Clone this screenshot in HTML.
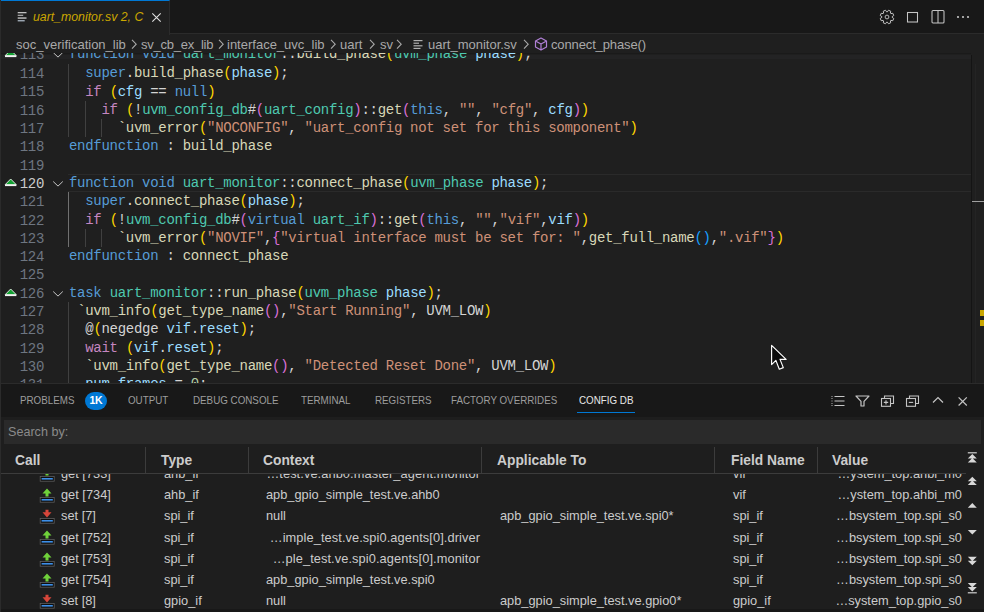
<!DOCTYPE html>
<html><head><meta charset="utf-8">
<style>
*{margin:0;padding:0;box-sizing:border-box}
html,body{width:984px;height:612px;overflow:hidden;background:#1f1f1f;font-family:"Liberation Sans",sans-serif}
.abs{position:absolute}
#tabbar{position:absolute;left:0;top:0;width:984px;height:34px;background:#181818;border-bottom:1px solid #2b2b2b}
#tab{position:absolute;left:0;top:0;width:170px;height:35px;background:#1f1f1f;border-top:1px solid #0078d4;border-right:1px solid #2b2b2b}
#tab .t{position:absolute;left:33px;top:9px;font-style:italic;font-size:12.3px;color:#cca700;white-space:nowrap}
#bc{position:absolute;left:0;top:35px;width:984px;height:18px;background:#1f1f1f;font-size:13px;color:#a9a9a9;white-space:nowrap}
#bc span{position:absolute;top:2px}
#editor{position:absolute;left:0;top:53px;width:984px;height:330px;overflow:hidden;background:#1f1f1f}
#editor .ln,#editor .num{position:absolute;height:18.3px;line-height:18.3px;font-family:"Liberation Mono",monospace;font-size:14px;letter-spacing:-0.28px;white-space:pre}
#editor .ln{left:69px}
#editor .num{left:0;width:44px;text-align:right;color:#6e7681;letter-spacing:-0.3px}
#editor .num.act{color:#cccccc}
.ed-inner{position:absolute;left:0;top:-53px;width:984px;height:383px}
.tri{position:absolute;left:4px}
.chev{position:absolute;left:52px}
.guide{position:absolute;width:1px;background:#404040}
#panel{position:absolute;left:0;top:383px;width:984px;height:229px;background:#181818;border-top:1px solid #2b2b2b}
.ptab{position:absolute;top:9.5px;font-size:10.9px;color:#9d9d9d;white-space:nowrap;transform:scaleX(0.9);transform-origin:0 0}
#search{position:absolute;left:4px;top:36px;width:977px;height:24px;background:#2a2a2a;color:#8b8b8b;font-size:12.6px}
#search span{position:absolute;left:4px;top:5px}
.th{position:absolute;top:68.5px;font-weight:bold;font-size:13.8px;color:#cccccc;white-space:nowrap}
.sep{position:absolute;top:63px;width:1px;height:26px;background:#3c3c3c}
.c{position:absolute;font-size:12.8px;color:#cccccc;white-space:nowrap}
</style></head><body>
<div class="abs" style="left:0;top:0;width:1px;height:612px;background:#2b2b2b;z-index:10"></div>
<div id="tabbar"></div>
<div id="tab">
  <svg class="abs" style="left:17px;top:10px" width="10" height="12" viewBox="0 0 10 12"><rect x="0.7" y="1" width="8.8" height="1.3" fill="#c0c0c0"/><rect x="0.7" y="3.7" width="5.5" height="1.3" fill="#a0a0a0"/><rect x="0.7" y="6.4" width="8.8" height="1.3" fill="#d0d0d0"/><rect x="0.7" y="9.1" width="7" height="1.3" fill="#a8b4c0"/></svg>
  <div class="t">uart_monitor.sv 2, C</div>
  <svg class="abs" style="left:151px;top:11px" width="11" height="11" viewBox="0 0 11 11"><path d="M1.3 1.3 L9.7 9.7 M9.7 1.3 L1.3 9.7" stroke="#e0e0e0" stroke-width="1.1"/></svg>
</div>
<!-- editor actions -->
<svg class="abs" style="left:879px;top:9px" width="16" height="16" viewBox="0 0 16 16"><path fill="none" stroke="#c5c5c5" stroke-width="1" stroke-linejoin="round" d="M13.09 8.31 L14.74 9.49 L13.82 11.71 L11.82 11.38 L11.38 11.82 L11.71 13.82 L9.49 14.74 L8.31 13.09 L7.69 13.09 L6.51 14.74 L4.29 13.82 L4.62 11.82 L4.18 11.38 L2.18 11.71 L1.26 9.49 L2.91 8.31 L2.91 7.69 L1.26 6.51 L2.18 4.29 L4.18 4.62 L4.62 4.18 L4.29 2.18 L6.51 1.26 L7.69 2.91 L8.31 2.91 L9.49 1.26 L11.71 2.18 L11.38 4.18 L11.82 4.62 L13.82 4.29 L14.74 6.51 L13.09 7.69Z"/><circle cx="8" cy="8" r="1.9" fill="none" stroke="#c5c5c5" stroke-width="0.9"/></svg>
<svg class="abs" style="left:906px;top:11px" width="13" height="12" viewBox="0 0 13 12"><rect x="1.5" y="1.5" width="10" height="9.5" fill="none" stroke="#c5c5c5" stroke-width="1.05"/></svg>
<svg class="abs" style="left:931px;top:9px" width="14" height="15" viewBox="0 0 14 15"><rect x="1" y="1.5" width="12" height="12.5" rx="1" fill="none" stroke="#c5c5c5" stroke-width="1.05"/><path d="M7 1.5 V14" stroke="#c5c5c5" stroke-width="1.05"/></svg>
<svg class="abs" style="left:956px;top:15px" width="14" height="4" viewBox="0 0 14 4"><circle cx="2" cy="2" r="1.1" fill="#c5c5c5"/><circle cx="7" cy="2" r="1.1" fill="#c5c5c5"/><circle cx="12" cy="2" r="1.1" fill="#c5c5c5"/></svg>

<div id="bc">
  <span style="left:16px">soc_verification_lib</span>
  <span style="left:141px;letter-spacing:-0.25px">sv_cb_ex_lib</span>
  <span style="left:227px">interface_uvc_lib</span>
  <span style="left:340px">uart</span>
  <span style="left:380px">sv</span>
  <span style="left:428px">uart_monitor.sv</span>
  <span style="left:551px;letter-spacing:-0.13px">connect_phase()</span>
  <svg class="abs" style="left:130px;top:4px" width="8" height="12" viewBox="0 0 8 12"><path d="M2 0.8 L6.2 5.2 L2 9.6" fill="none" stroke="#a9a9a9" stroke-width="1.1"/></svg>
  <svg class="abs" style="left:217px;top:4px" width="8" height="12" viewBox="0 0 8 12"><path d="M2 0.8 L6.2 5.2 L2 9.6" fill="none" stroke="#a9a9a9" stroke-width="1.1"/></svg>
  <svg class="abs" style="left:329px;top:4px" width="8" height="12" viewBox="0 0 8 12"><path d="M2 0.8 L6.2 5.2 L2 9.6" fill="none" stroke="#a9a9a9" stroke-width="1.1"/></svg>
  <svg class="abs" style="left:368px;top:4px" width="8" height="12" viewBox="0 0 8 12"><path d="M2 0.8 L6.2 5.2 L2 9.6" fill="none" stroke="#a9a9a9" stroke-width="1.1"/></svg>
  <svg class="abs" style="left:395px;top:4px" width="8" height="12" viewBox="0 0 8 12"><path d="M2 0.8 L6.2 5.2 L2 9.6" fill="none" stroke="#a9a9a9" stroke-width="1.1"/></svg>
  <svg class="abs" style="left:413px;top:4px" width="10" height="11" viewBox="0 0 10 11"><rect x="0.5" y="1" width="9" height="1.2" fill="#b0b0b0"/><rect x="0.5" y="3.6" width="5.5" height="1.2" fill="#b0b0b0"/><rect x="0.5" y="6.2" width="9" height="1.2" fill="#b0b0b0"/><rect x="0.5" y="8.8" width="7" height="1.2" fill="#b0b0b0"/></svg>
  <svg class="abs" style="left:522px;top:4px" width="8" height="12" viewBox="0 0 8 12"><path d="M2 0.8 L6.2 5.2 L2 9.6" fill="none" stroke="#a9a9a9" stroke-width="1.1"/></svg>
  <svg class="abs" style="left:534px;top:2px" width="14" height="14" viewBox="0 0 14 14"><path d="M7 1 L12.5 4 V10 L7 13 L1.5 10 V4 Z M1.5 4 L7 7 L12.5 4 M7 7 V13" fill="none" stroke="#b180d7" stroke-width="1.2" stroke-linejoin="round"/></svg>
</div>

<div id="editor"><div class="ed-inner">
<div class="abs" style="left:0;top:52px;width:971px;height:1.5px;background:#1a1a1a"></div><div class="abs" style="left:0;top:55px;width:971px;height:4px;background:#232324"></div>
<div class="guide" style="left:68.0px;top:64.10px;height:73.20px;background:#404040"></div>
<div class="guide" style="left:85.0px;top:100.70px;height:36.60px;background:#404040"></div>
<div class="guide" style="left:101.0px;top:119.00px;height:18.30px;background:#404040"></div>
<div class="guide" style="left:68.0px;top:192.20px;height:54.90px;background:#707070"></div>
<div class="guide" style="left:85.0px;top:228.80px;height:18.30px;background:#404040"></div>
<div class="guide" style="left:101.0px;top:228.80px;height:18.30px;background:#404040"></div>
<div class="guide" style="left:68.0px;top:302.00px;height:91.50px;background:#404040"></div>
<div class="abs" style="left:68px;top:173.9px;width:903px;height:18.3px;border-top:1px solid #2a2a2a;border-bottom:1px solid #2a2a2a"></div>
<div class="num" style="top:45.90px">113</div>
<svg class="tri" style="top:49.30px" width="14" height="10" viewBox="0 0 14 10"><path d="M1.2 6.6 L6.7 1 L12.2 6.6 Z" fill="#12a233" stroke="#e8f0e8" stroke-width="0.9"/><rect x="1" y="6.6" width="11.4" height="1.5" fill="#f4f4f4"/></svg>
<svg class="chev" style="top:51.10px" width="12" height="8" viewBox="0 0 12 8"><path d="M1.2 1.5 L6 6.1 L10.8 1.5" fill="none" stroke="#c5c5c5" stroke-width="1.0"/></svg>
<div class="num" style="top:65.10px">114</div>
<div class="num" style="top:83.40px">115</div>
<div class="num" style="top:101.70px">116</div>
<div class="num" style="top:120.00px">117</div>
<div class="num" style="top:138.30px">118</div>
<div class="num" style="top:156.60px">119</div>
<div class="num act" style="top:174.90px">120</div>
<svg class="tri" style="top:178.30px" width="14" height="10" viewBox="0 0 14 10"><path d="M1.2 6.6 L6.7 1 L12.2 6.6 Z" fill="#12a233" stroke="#e8f0e8" stroke-width="0.9"/><rect x="1" y="6.6" width="11.4" height="1.5" fill="#f4f4f4"/></svg>
<svg class="chev" style="top:180.10px" width="12" height="8" viewBox="0 0 12 8"><path d="M1.2 1.5 L6 6.1 L10.8 1.5" fill="none" stroke="#c5c5c5" stroke-width="1.0"/></svg>
<div class="num" style="top:193.20px">121</div>
<div class="num" style="top:211.50px">122</div>
<div class="num" style="top:229.80px">123</div>
<div class="num" style="top:248.10px">124</div>
<div class="num" style="top:266.40px">125</div>
<div class="num" style="top:284.70px">126</div>
<svg class="tri" style="top:288.10px" width="14" height="10" viewBox="0 0 14 10"><path d="M1.2 6.6 L6.7 1 L12.2 6.6 Z" fill="#12a233" stroke="#e8f0e8" stroke-width="0.9"/><rect x="1" y="6.6" width="11.4" height="1.5" fill="#f4f4f4"/></svg>
<svg class="chev" style="top:289.90px" width="12" height="8" viewBox="0 0 12 8"><path d="M1.2 1.5 L6 6.1 L10.8 1.5" fill="none" stroke="#c5c5c5" stroke-width="1.0"/></svg>
<div class="num" style="top:303.00px">127</div>
<div class="num" style="top:321.30px">128</div>
<div class="num" style="top:339.60px">129</div>
<div class="num" style="top:357.90px">130</div>
<div class="num" style="top:376.20px">131</div>
<div class="ln" style="top:45.00px"><span style="color:#569cd6">function</span><span style="color:#d4d4d4"> </span><span style="color:#569cd6">void</span><span style="color:#d4d4d4"> </span><span style="color:#4ec9b0">uart_monitor</span><span style="color:#d4d4d4">::</span><span style="color:#d8d8b8">build_phase</span><span style="color:#ffd700">(</span><span style="color:#4ec9b0">uvm_phase</span><span style="color:#d4d4d4"> </span><span style="color:#9cdcfe">phase</span><span style="color:#ffd700">)</span><span style="color:#d4d4d4">;</span></div>
<div class="ln" style="top:64.20px"><span style="color:#d4d4d4">  </span><span style="color:#569cd6">super</span><span style="color:#d4d4d4">.</span><span style="color:#d8d8b8">build_phase</span><span style="color:#ffd700">(</span><span style="color:#9cdcfe">phase</span><span style="color:#ffd700">)</span><span style="color:#d4d4d4">;</span></div>
<div class="ln" style="top:82.50px"><span style="color:#d4d4d4">  </span><span style="color:#c586c0">if</span><span style="color:#d4d4d4"> </span><span style="color:#ffd700">(</span><span style="color:#9cdcfe">cfg</span><span style="color:#d4d4d4"> == </span><span style="color:#569cd6">null</span><span style="color:#ffd700">)</span></div>
<div class="ln" style="top:100.80px"><span style="color:#d4d4d4">    </span><span style="color:#c586c0">if</span><span style="color:#d4d4d4"> </span><span style="color:#ffd700">(</span><span style="color:#d4d4d4">!</span><span style="color:#4ec9b0">uvm_config_db</span><span style="color:#d4d4d4">#</span><span style="color:#da70d6">(</span><span style="color:#4ec9b0">uart_config</span><span style="color:#da70d6">)</span><span style="color:#d4d4d4">::</span><span style="color:#d8d8b8">get</span><span style="color:#da70d6">(</span><span style="color:#569cd6">this</span><span style="color:#d4d4d4">, </span><span style="color:#ce9178">""</span><span style="color:#d4d4d4">, </span><span style="color:#ce9178">"cfg"</span><span style="color:#d4d4d4">, </span><span style="color:#9cdcfe">cfg</span><span style="color:#da70d6">)</span><span style="color:#ffd700">)</span></div>
<div class="ln" style="top:119.10px"><span style="color:#d4d4d4">      </span><span style="color:#d8d8b8">`uvm_error</span><span style="color:#ffd700">(</span><span style="color:#ce9178">"NOCONFIG"</span><span style="color:#d4d4d4">, </span><span style="color:#ce9178">"uart_config not set for this somponent"</span><span style="color:#ffd700">)</span></div>
<div class="ln" style="top:137.40px"><span style="color:#569cd6">endfunction</span><span style="color:#d4d4d4"> : </span><span style="color:#d8d8b8">build_phase</span></div>
<div class="ln" style="top:155.70px"></div>
<div class="ln" style="top:174.00px"><span style="color:#569cd6">function</span><span style="color:#d4d4d4"> </span><span style="color:#569cd6">void</span><span style="color:#d4d4d4"> </span><span style="color:#4ec9b0">uart_monitor</span><span style="color:#d4d4d4">::</span><span style="color:#d8d8b8">connect_phase</span><span style="color:#ffd700">(</span><span style="color:#4ec9b0">uvm_phase</span><span style="color:#d4d4d4"> </span><span style="color:#9cdcfe">phase</span><span style="color:#ffd700">)</span><span style="color:#d4d4d4">;</span></div>
<div class="ln" style="top:192.30px"><span style="color:#d4d4d4">  </span><span style="color:#569cd6">super</span><span style="color:#d4d4d4">.</span><span style="color:#d8d8b8">connect_phase</span><span style="color:#ffd700">(</span><span style="color:#9cdcfe">phase</span><span style="color:#ffd700">)</span><span style="color:#d4d4d4">;</span></div>
<div class="ln" style="top:210.60px"><span style="color:#d4d4d4">  </span><span style="color:#c586c0">if</span><span style="color:#d4d4d4"> </span><span style="color:#ffd700">(</span><span style="color:#d4d4d4">!</span><span style="color:#4ec9b0">uvm_config_db</span><span style="color:#d4d4d4">#</span><span style="color:#da70d6">(</span><span style="color:#569cd6">virtual</span><span style="color:#d4d4d4"> </span><span style="color:#4ec9b0">uart_if</span><span style="color:#da70d6">)</span><span style="color:#d4d4d4">::</span><span style="color:#d8d8b8">get</span><span style="color:#da70d6">(</span><span style="color:#569cd6">this</span><span style="color:#d4d4d4">, </span><span style="color:#ce9178">""</span><span style="color:#d4d4d4">,</span><span style="color:#ce9178">"vif"</span><span style="color:#d4d4d4">,</span><span style="color:#9cdcfe">vif</span><span style="color:#da70d6">)</span><span style="color:#ffd700">)</span></div>
<div class="ln" style="top:228.90px"><span style="color:#d4d4d4">      </span><span style="color:#d8d8b8">`uvm_error</span><span style="color:#ffd700">(</span><span style="color:#ce9178">"NOVIF"</span><span style="color:#d4d4d4">,</span><span style="color:#da70d6">{</span><span style="color:#ce9178">"virtual interface must be set for: "</span><span style="color:#d4d4d4">,</span><span style="color:#d8d8b8">get_full_name</span><span style="color:#179fff">()</span><span style="color:#d4d4d4">,</span><span style="color:#ce9178">".vif"</span><span style="color:#da70d6">}</span><span style="color:#ffd700">)</span></div>
<div class="ln" style="top:247.20px"><span style="color:#569cd6">endfunction</span><span style="color:#d4d4d4"> : </span><span style="color:#d8d8b8">connect_phase</span></div>
<div class="ln" style="top:265.50px"></div>
<div class="ln" style="top:283.80px"><span style="color:#569cd6">task</span><span style="color:#d4d4d4"> </span><span style="color:#4ec9b0">uart_monitor</span><span style="color:#d4d4d4">::</span><span style="color:#d8d8b8">run_phase</span><span style="color:#ffd700">(</span><span style="color:#4ec9b0">uvm_phase</span><span style="color:#d4d4d4"> </span><span style="color:#9cdcfe">phase</span><span style="color:#ffd700">)</span><span style="color:#d4d4d4">;</span></div>
<div class="ln" style="top:302.10px"><span style="color:#d4d4d4"> </span><span style="color:#d8d8b8">`uvm_info</span><span style="color:#ffd700">(</span><span style="color:#d8d8b8">get_type_name</span><span style="color:#da70d6">()</span><span style="color:#d4d4d4">,</span><span style="color:#ce9178">"Start Running"</span><span style="color:#d4d4d4">, UVM_LOW</span><span style="color:#ffd700">)</span></div>
<div class="ln" style="top:320.40px"><span style="color:#d4d4d4">  @</span><span style="color:#ffd700">(</span><span style="color:#d4d4d4">negedge </span><span style="color:#9cdcfe">vif</span><span style="color:#d4d4d4">.</span><span style="color:#9cdcfe">reset</span><span style="color:#ffd700">)</span><span style="color:#d4d4d4">;</span></div>
<div class="ln" style="top:338.70px"><span style="color:#d4d4d4">  </span><span style="color:#c586c0">wait</span><span style="color:#d4d4d4"> </span><span style="color:#ffd700">(</span><span style="color:#9cdcfe">vif</span><span style="color:#d4d4d4">.</span><span style="color:#9cdcfe">reset</span><span style="color:#ffd700">)</span><span style="color:#d4d4d4">;</span></div>
<div class="ln" style="top:357.00px"><span style="color:#d4d4d4">  </span><span style="color:#d8d8b8">`uvm_info</span><span style="color:#ffd700">(</span><span style="color:#d8d8b8">get_type_name</span><span style="color:#da70d6">()</span><span style="color:#d4d4d4">, </span><span style="color:#ce9178">"Detected Reset Done"</span><span style="color:#d4d4d4">, UVM_LOW</span><span style="color:#ffd700">)</span></div>
<div class="ln" style="top:375.30px"><span style="color:#d4d4d4">  </span><span style="color:#9cdcfe">num_frames</span><span style="color:#d4d4d4"> = </span><span style="color:#b5cea8">0</span><span style="color:#d4d4d4">;</span></div>

<div class="abs" style="left:971px;top:55px;width:1px;height:328px;background:#141414"></div><div class="abs" style="left:975px;top:64px;width:1px;height:319px;background:#242424"></div>
<div class="abs" style="left:972px;top:200.5px;width:12px;height:1.5px;background:#a0a0a0"></div>
<div class="abs" style="left:980px;top:310px;width:4px;height:6px;background:#c9a600"></div>
<div class="abs" style="left:980px;top:320px;width:4px;height:6px;background:#c9a600"></div>
<svg class="abs" style="left:770px;top:344px" width="19" height="28" viewBox="0 0 19 28"><path d="M1.6 1.4 L1.6 20.6 L5.9 16.4 L9.3 25.2 L13.3 23.6 L10 15.4 L16.1 15.4 Z" fill="#0a0a0a" stroke="#ffffff" stroke-width="1.15" stroke-linejoin="round"/></svg>
</div></div>

<div id="panel">
  <span class="ptab" style="left:20px">PROBLEMS</span>
  <div class="abs" style="left:85px;top:8.3px;width:22px;height:17.5px;border-radius:9px;background:#0078d4;color:#fff;font-size:10.5px;font-weight:bold;line-height:17px;text-align:center;letter-spacing:-0.2px">1K</div>
  <span class="ptab" style="left:128px">OUTPUT</span>
  <span class="ptab" style="left:193px">DEBUG CONSOLE</span>
  <span class="ptab" style="left:301px">TERMINAL</span>
  <span class="ptab" style="left:375px">REGISTERS</span>
  <span class="ptab" style="left:451px">FACTORY OVERRIDES</span>
  <span class="ptab" style="left:579px;color:#e7e7e7">CONFIG DB</span>
  <div class="abs" style="left:577px;top:28px;width:58px;height:1px;background:#0078d4"></div>
  <!-- panel actions -->
  <svg class="abs" style="left:830px;top:11px" width="16" height="13" viewBox="0 0 16 13"><path d="M4.5 1.5 H14.5 M4.5 6 H14.5 M4.5 10.5 H14.5" stroke="#c5c5c5" stroke-width="1.1"/><path d="M1.5 1.5 H2.5 M1.5 3.5 H2.5 M1.5 6 H2.5 M1.5 8.5 H2.5 M1.5 10.5 H2.5" stroke="#c5c5c5" stroke-width="0.9"/></svg>
  <svg class="abs" style="left:855px;top:11px" width="15" height="13" viewBox="0 0 15 13"><path d="M1 1 H14 L9 6.3 V11 H6 V6.3 Z" fill="none" stroke="#c5c5c5" stroke-width="1.2" stroke-linejoin="round"/></svg>
  <svg class="abs" style="left:880px;top:11px" width="15" height="13" viewBox="0 0 15 13"><path d="M4.5 3 V1 H13.5 V8.5 H11" fill="none" stroke="#c5c5c5" stroke-width="1.1"/><rect x="1.5" y="3.5" width="9" height="7.8" fill="none" stroke="#c5c5c5" stroke-width="1.1"/><path d="M6 5.2 V9.6 M3.8 7.4 H8.2" stroke="#c5c5c5" stroke-width="1.1"/></svg>
  <svg class="abs" style="left:905px;top:11px" width="15" height="13" viewBox="0 0 15 13"><path d="M4.5 3 V1 H13.5 V8.5 H11" fill="none" stroke="#c5c5c5" stroke-width="1.1"/><rect x="1.5" y="3.5" width="9" height="7.8" fill="none" stroke="#c5c5c5" stroke-width="1.1"/><path d="M3.8 7.4 H8.2" stroke="#c5c5c5" stroke-width="1.1"/></svg>
  <svg class="abs" style="left:932px;top:12px" width="12" height="8" viewBox="0 0 12 8"><path d="M1 6.5 L6 1.5 L11 6.5" fill="none" stroke="#c5c5c5" stroke-width="1.2"/></svg>
  <svg class="abs" style="left:957px;top:11.5px" width="11" height="11" viewBox="0 0 11 11"><path d="M1.6 1.3 L9.8 9.5 M9.8 1.3 L1.6 9.5" stroke="#c5c5c5" stroke-width="1.2"/></svg>

  <div class="abs" style="left:0;top:33px;width:984px;height:196px;background:#1e1e1e"></div>
  <div id="search"><span>Search by:</span></div>

  <span class="th" style="left:15px">Call</span>
  <span class="th" style="left:161px">Type</span>
  <span class="th" style="left:263px">Context</span>
  <span class="th" style="left:497px">Applicable To</span>
  <span class="th" style="left:731px">Field Name</span>
  <span class="th" style="left:832px">Value</span>
  <div class="sep" style="left:145px"></div>
  <div class="sep" style="left:248px"></div>
  <div class="sep" style="left:481px"></div>
  <div class="sep" style="left:714px"></div>
  <div class="sep" style="left:817px"></div>
  <div class="abs" style="left:0;top:89px;width:966px;height:1px;background:#3c3c3c"></div>
  <div class="abs" style="left:0;top:90px;width:966px;height:135px;overflow:hidden">
  <svg style="position:absolute;left:39px;top:-6.90px" width="16" height="15" viewBox="0 0 16 15"><path d="M8 0.6 L12.5 5.6 L9.5 5.6 L9.5 8.4 L6.5 8.4 L6.5 5.6 L3.5 5.6 Z" fill="#6fd13a"/><rect x="1.2" y="9.4" width="14" height="4.8" fill="#0e0e0e" stroke="#5e5e5e" stroke-width="0.8"/><rect x="2.6" y="11" width="11.2" height="1.6" fill="#3d8fe8"/></svg>
<span class="c" style="left:61px;top:-7.80px">get [733]</span>
<span class="c" style="left:164px;top:-7.80px">ahb_if</span>
<span class="c r" style="right:486px;top:-7.80px;letter-spacing:0.09px">…test.ve.ahb0.master_agent.monitor</span>
<span class="c" style="left:733px;top:-7.80px">vif</span>
<span class="c r" style="right:4px;top:-7.80px">…ystem_top.ahbi_m0</span>
<svg style="position:absolute;left:39px;top:14.20px" width="16" height="15" viewBox="0 0 16 15"><path d="M8 0.6 L12.5 5.6 L9.5 5.6 L9.5 8.4 L6.5 8.4 L6.5 5.6 L3.5 5.6 Z" fill="#6fd13a"/><rect x="1.2" y="9.4" width="14" height="4.8" fill="#0e0e0e" stroke="#5e5e5e" stroke-width="0.8"/><rect x="2.6" y="11" width="11.2" height="1.6" fill="#3d8fe8"/></svg>
<span class="c" style="left:61px;top:13.30px">get [734]</span>
<span class="c" style="left:164px;top:13.30px">ahb_if</span>
<span class="c" style="left:266px;top:13.30px">apb_gpio_simple_test.ve.ahb0</span>
<span class="c" style="left:733px;top:13.30px">vif</span>
<span class="c r" style="right:4px;top:13.30px">…ystem_top.ahbi_m0</span>
<svg style="position:absolute;left:39px;top:35.30px" width="16" height="15" viewBox="0 0 16 15"><path d="M6.5 0.8 L9.5 0.8 L9.5 3.2 L12.5 3.2 L8 8.4 L3.5 3.2 L6.5 3.2 Z" fill="#d8463a"/><rect x="1.2" y="9.4" width="14" height="4.8" fill="#0e0e0e" stroke="#5e5e5e" stroke-width="0.8"/><rect x="2.6" y="11" width="11.2" height="1.6" fill="#3d8fe8"/></svg>
<span class="c" style="left:61px;top:34.40px">set [7]</span>
<span class="c" style="left:164px;top:34.40px">spi_if</span>
<span class="c" style="left:266px;top:34.40px">null</span>
<span class="c" style="left:500px;top:34.40px">apb_gpio_simple_test.ve.spi0*</span>
<span class="c" style="left:733px;top:34.40px">spi_if</span>
<span class="c r" style="right:4px;top:34.40px">…bsystem_top.spi_s0</span>
<svg style="position:absolute;left:39px;top:56.40px" width="16" height="15" viewBox="0 0 16 15"><path d="M8 0.6 L12.5 5.6 L9.5 5.6 L9.5 8.4 L6.5 8.4 L6.5 5.6 L3.5 5.6 Z" fill="#6fd13a"/><rect x="1.2" y="9.4" width="14" height="4.8" fill="#0e0e0e" stroke="#5e5e5e" stroke-width="0.8"/><rect x="2.6" y="11" width="11.2" height="1.6" fill="#3d8fe8"/></svg>
<span class="c" style="left:61px;top:55.50px">get [752]</span>
<span class="c" style="left:164px;top:55.50px">spi_if</span>
<span class="c r" style="right:486px;top:55.50px;letter-spacing:0.09px">…imple_test.ve.spi0.agents[0].driver</span>
<span class="c" style="left:733px;top:55.50px">spi_if</span>
<span class="c r" style="right:4px;top:55.50px">…bsystem_top.spi_s0</span>
<svg style="position:absolute;left:39px;top:77.50px" width="16" height="15" viewBox="0 0 16 15"><path d="M8 0.6 L12.5 5.6 L9.5 5.6 L9.5 8.4 L6.5 8.4 L6.5 5.6 L3.5 5.6 Z" fill="#6fd13a"/><rect x="1.2" y="9.4" width="14" height="4.8" fill="#0e0e0e" stroke="#5e5e5e" stroke-width="0.8"/><rect x="2.6" y="11" width="11.2" height="1.6" fill="#3d8fe8"/></svg>
<span class="c" style="left:61px;top:76.60px">get [753]</span>
<span class="c" style="left:164px;top:76.60px">spi_if</span>
<span class="c r" style="right:486px;top:76.60px;letter-spacing:0.09px">…ple_test.ve.spi0.agents[0].monitor</span>
<span class="c" style="left:733px;top:76.60px">spi_if</span>
<span class="c r" style="right:4px;top:76.60px">…bsystem_top.spi_s0</span>
<svg style="position:absolute;left:39px;top:98.60px" width="16" height="15" viewBox="0 0 16 15"><path d="M8 0.6 L12.5 5.6 L9.5 5.6 L9.5 8.4 L6.5 8.4 L6.5 5.6 L3.5 5.6 Z" fill="#6fd13a"/><rect x="1.2" y="9.4" width="14" height="4.8" fill="#0e0e0e" stroke="#5e5e5e" stroke-width="0.8"/><rect x="2.6" y="11" width="11.2" height="1.6" fill="#3d8fe8"/></svg>
<span class="c" style="left:61px;top:97.70px">get [754]</span>
<span class="c" style="left:164px;top:97.70px">spi_if</span>
<span class="c" style="left:266px;top:97.70px">apb_gpio_simple_test.ve.spi0</span>
<span class="c" style="left:733px;top:97.70px">spi_if</span>
<span class="c r" style="right:4px;top:97.70px">…bsystem_top.spi_s0</span>
<svg style="position:absolute;left:39px;top:119.70px" width="16" height="15" viewBox="0 0 16 15"><path d="M6.5 0.8 L9.5 0.8 L9.5 3.2 L12.5 3.2 L8 8.4 L3.5 3.2 L6.5 3.2 Z" fill="#d8463a"/><rect x="1.2" y="9.4" width="14" height="4.8" fill="#0e0e0e" stroke="#5e5e5e" stroke-width="0.8"/><rect x="2.6" y="11" width="11.2" height="1.6" fill="#3d8fe8"/></svg>
<span class="c" style="left:61px;top:118.80px">set [8]</span>
<span class="c" style="left:164px;top:118.80px">gpio_if</span>
<span class="c" style="left:266px;top:118.80px">null</span>
<span class="c" style="left:500px;top:118.80px">apb_gpio_simple_test.ve.gpio0*</span>
<span class="c" style="left:733px;top:118.80px">gpio_if</span>
<span class="c r" style="right:4px;top:118.80px">…system_top.gpio_s0</span>
  </div>
  <svg style="position:absolute;left:0;top:-384px" width="984" height="612" viewBox="0 0 984 612"><rect x="967.8" y="452.2" width="9.0" height="1.2" fill="#d0d0d0"/><path d="M967.8 458.5 L972.3 454.0 L976.8 458.5 Z M967.8 462.5 L972.3 458.0 L976.8 462.5 Z" fill="#d8d8d8"/><path d="M967.8 481.3 L972.3 476.8 L976.8 481.3 Z M967.8 485.1 L972.3 480.6 L976.8 485.1 Z" fill="#d8d8d8"/><path d="M967.8 507.8 L972.3 503.0 L976.8 507.8 Z" fill="#d8d8d8"/><path d="M967.8 530.0 L976.8 530.0 L972.3 534.5 Z" fill="#d8d8d8"/><path d="M967.8 556.8 L976.8 556.8 L972.3 561.3 Z M967.8 560.8 L976.8 560.8 L972.3 565.3 Z" fill="#d8d8d8"/><path d="M967.8 583.0 L976.8 583.0 L972.3 587.5 Z M967.8 587.0 L976.8 587.0 L972.3 591.5 Z" fill="#d8d8d8"/><rect x="967.8" y="592.2" width="9.0" height="1.2" fill="#d0d0d0"/></svg>
  <div class="abs" style="left:0;top:225px;width:984px;height:4px;background:#181818"></div>
</div>
</body></html>
